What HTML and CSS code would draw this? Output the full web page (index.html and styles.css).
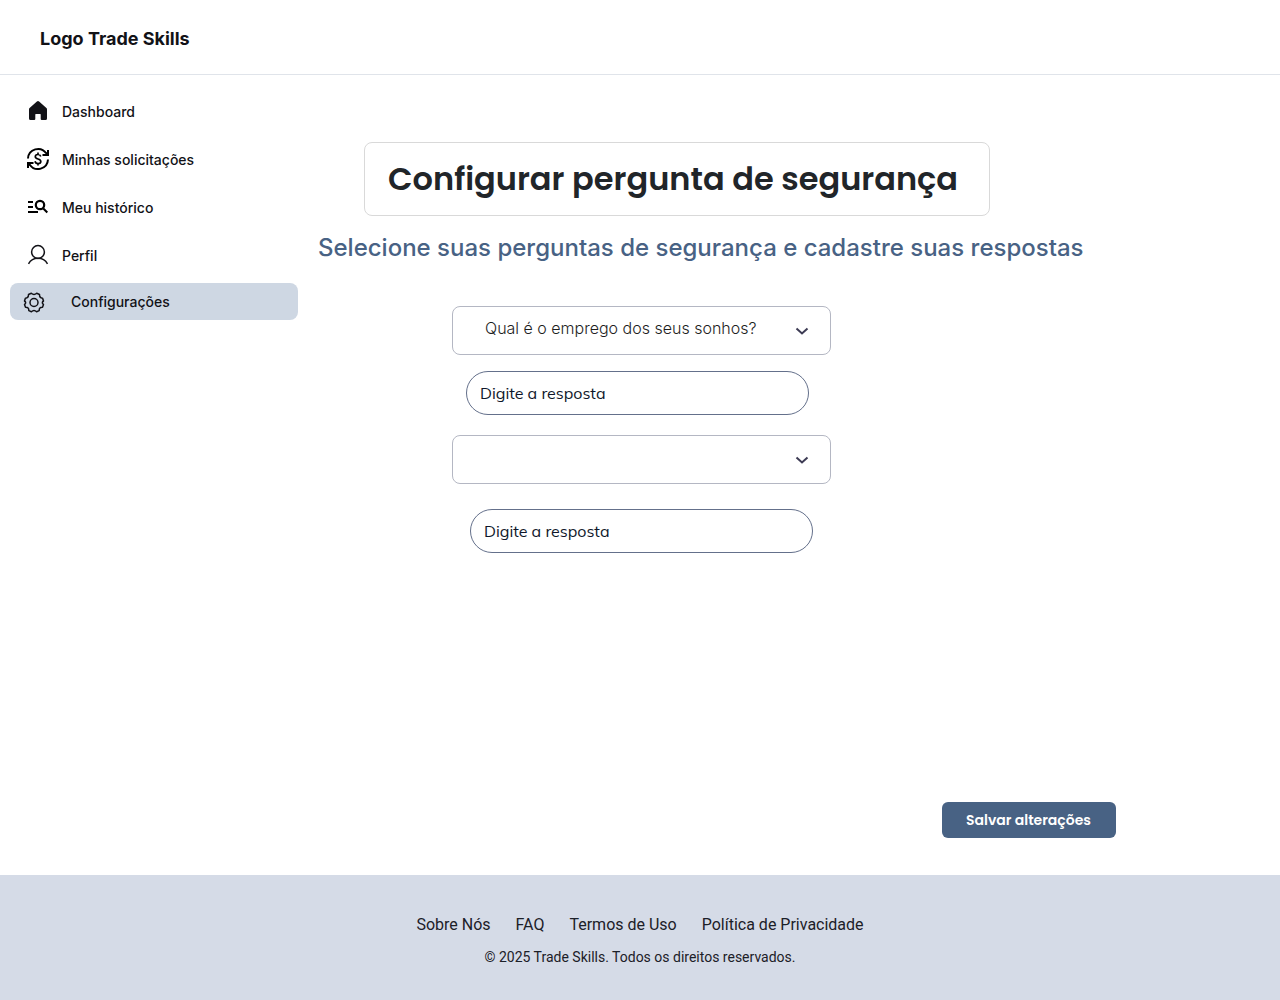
FILE: index.html
```html
<!DOCTYPE html>
<html lang="pt-BR">
<head>
<meta charset="utf-8">
<meta name="viewport" content="width=device-width, initial-scale=1">
<title>Trade Skills – Configurar pergunta de segurança</title>
<link rel="stylesheet" href="styles.css">
</head>
<body>
<header class="topbar"><a class="brand" href="#">Logo Trade Skills</a></header>
<div class="layout">
  <nav class="sidebar" aria-label="Menu principal">
    <a class="nav-link" href="#">
      <svg class="icon" viewBox="0 0 24 24" aria-hidden="true"><path fill="#121217" d="M10.9 2.5a1.6 1.6 0 0 1 2.2 0l7.3 6.6c.4.4.6.8.6 1.300V19.500a1.500 1.500 0 0 1-1.500 1.500h-3.700a1.100 1.100 0 0 1-1.100-1.100V15.500a.5.5 0 0 0-.5-.5h-4.400a.5.5 0 0 0-.5.5v4.400a1.100 1.100 0 0 1-1.100 1.100H4.500A1.500 1.500 0 0 1 3 19.500v-9.100c0-.5.2-.9.6-1.300z"/></svg>
      <span class="nav-text">Dashboard</span>
    </a>
    <a class="nav-link" href="#">
      <svg class="icon" viewBox="0 0 24 24" aria-hidden="true" fill="none" stroke="#000" stroke-width="2"><path d="M2 11.500A10 10 0 0 1 20.200 6.300M22 12.500A10 10 0 0 1 3.800 17.700M22 3v5h-5.500M2 21v-5h5.500"/><path stroke-width="1.700" d="M14.800 9.500C14.400 8.300 13.400 7.500 12 7.500c-1.600 0-2.700.9-2.700 2.200 0 3 5.500 1.600 5.500 4.700 0 1.300-1.200 2.200-2.800 2.200-1.600 0-2.700-.9-3-2.300M12 5.500v2M12 16.500v2"/><path fill="#000" stroke="none" d="M17.500 8.500H22V4zM6.500 15.500H2V20z"/></svg>
      <span class="nav-text">Minhas solicitações</span>
    </a>
    <a class="nav-link" href="#">
      <svg class="icon" viewBox="0 0 24 24" aria-hidden="true" fill="none" stroke="#000" stroke-width="2"><path d="M2 7h5M2 12h5M2 17h10M17.300 13.500 21.300 17.500"/><circle cx="14" cy="10" r="4.200" stroke-width="2.200"/></svg>
      <span class="nav-text">Meu histórico</span>
    </a>
    <a class="nav-link" href="#">
      <svg class="icon" viewBox="0 0 24 24" aria-hidden="true" fill="none" stroke="#121217" stroke-width="1.500"><circle cx="12" cy="9" r="6.400"/><path d="M2.500 20.800a11 11 0 0 1 19 0"/></svg>
      <span class="nav-text">Perfil</span>
    </a>
    <a class="nav-link nav-link-active" href="#" aria-current="page">
      <svg class="icon" viewBox="0 0 24 24" aria-hidden="true" fill="none" stroke="#121217" stroke-width="1.500" stroke-linejoin="round"><circle cx="12" cy="12.500" r="4"/><path d="M9.300 3.300Q12 5.600 14.700 3.300L17.500 4.500Q17.300 8 20.600 8.200L21.500 11Q19.200 12.500 21.500 14.500L20.500 17.200Q17 17 17.200 20.600L14.600 21.700Q12 19.200 9.400 21.700L6.800 20.600Q7 17 3.500 17.200L2.500 14.500Q4.800 12.500 2.500 11L3.400 8.200Q6.700 8 6.500 4.500z"/></svg>
      <span class="nav-text">Configurações</span>
    </a>
  </nav>
  <main class="content">
    <h1 class="title">Configurar pergunta de segurança</h1>
    <p class="subtitle">Selecione suas perguntas de segurança e cadastre suas respostas</p>
    <form class="form" id="security-form">
      <div class="select-box">
        <select class="select" aria-label="Primeira pergunta de segurança"><option>Qual é o emprego dos seus sonhos?</option></select>
        <svg class="chevron" viewBox="0 0 16 16" aria-hidden="true"><path d="m2.500 5.500 5.500 5 5.500-5"/></svg>
      </div>
      <input class="answer" type="text" placeholder="Digite a resposta" aria-label="Resposta da primeira pergunta">
      <div class="select-box">
        <select class="select" aria-label="Segunda pergunta de segurança"><option></option></select>
        <svg class="chevron" viewBox="0 0 16 16" aria-hidden="true"><path d="m2.500 5.500 5.500 5 5.500-5"/></svg>
      </div>
      <input class="answer answer-second" type="text" placeholder="Digite a resposta" aria-label="Resposta da segunda pergunta">
    </form>
    <button class="save" type="submit" form="security-form">Salvar alterações</button>
  </main>
</div>
<footer class="footer">
  <nav class="footer-links" aria-label="Rodapé">
    <a href="#">Sobre Nós</a><a href="#">FAQ</a><a href="#">Termos de Uso</a><a href="#">Política de Privacidade</a>
  </nav>
  <p class="copyright">© 2025 Trade Skills. Todos os direitos reservados.</p>
</footer>
</body>
</html>
```
FILE: styles.css
```css
* { box-sizing: border-box; }
body {
  margin: 0;
  min-height: 100vh;
  display: flex;
  flex-direction: column;
  background: #fff;
  color: #121217;
  font-family: Inter, "Liberation Sans", sans-serif;
}
a { color: inherit; text-decoration: none; }

.topbar {
  padding: 27px 40px 23px;
  border-bottom: 1px solid #e0e4ea;
}
.brand { display: block; font-size: 18px; line-height: 24px; font-weight: 700; }

.layout { flex: 1; display: flex; }
.sidebar {
  flex: none;
  width: 298px;
  padding: 12px 0 0 10px;
  display: flex;
  flex-direction: column;
}
.nav-link {
  display: flex;
  align-items: center;
  gap: 12px;
  height: 48px;
  padding-left: 16px;
  font-size: 14px;
  line-height: 20px;
  font-weight: 500;
}
.nav-text { padding-top: 2px; }
.nav-link-active {
  height: 37px;
  margin-top: 4px;
  padding-left: 12px;
  gap: 25px;
  background: #ced7e3;
  border-radius: 8px;
}
.nav-link-active .nav-text { padding-top: 0; }
.icon { width: 24px; height: 24px; flex: none; }

.content {
  flex: 1;
  padding: 67px 164px 37px 20px;
  display: flex;
  flex-direction: column;
  align-items: flex-start;
}
.title {
  margin: 0 0 0 46px;
  padding: 11px 31px 11px 23px;
  border: 1px solid #d9d9d9;
  border-radius: 8px;
  color: #212529;
  font-family: Poppins, Inter, sans-serif;
  font-size: 32px;
  line-height: 50px;
  font-weight: 600;
  white-space: nowrap;
}
.subtitle {
  margin: 16px 0 0;
  color: #486284;
  font-size: 24px;
  line-height: 32px;
  font-weight: 500;
  white-space: nowrap;
}
.form {
  width: 379px;
  margin: 42px 0 0 134px;
  display: flex;
  flex-direction: column;
}
.select-box { display: grid; align-items: center; }
.select, .chevron { grid-area: 1 / 1; }
.select {
  appearance: none;
  width: 100%;
  height: 49px;
  padding: 0 60px 5px 32px;
  border: 1px solid #b4b7c3;
  border-radius: 8px;
  background: #fff;
  color: #1e1e1e;
  font-family: inherit;
  font-size: 16px;
  font-weight: 300;
}
.chevron {
  width: 16px;
  height: 16px;
  margin-right: 21px;
  justify-self: end;
  pointer-events: none;
  fill: none;
  stroke: #3d3b54;
  stroke-width: 2;
}
.answer {
  width: 343px;
  height: 44px;
  margin: 16px 0 20px 14px;
  padding: 0 13px;
  border: 1px solid #64708b;
  border-radius: 22px;
  background: #fff;
  color: #0f172a;
  font-family: Mulish, Lato, sans-serif;
  font-size: 16px;
}
.answer-second { margin: 25px 0 0 18px; }
.answer::placeholder { color: #0f172a; opacity: 1; }
.save {
  margin-top: auto;
  align-self: flex-end;
  height: 36px;
  padding: 0 25px 0 24px;
  border: 0;
  border-radius: 6px;
  background: #486284;
  color: #fff;
  font-family: Poppins, Inter, sans-serif;
  font-size: 14px;
  font-weight: 600;
}

.footer {
  padding: 38px 24px 33px;
  background: #d5dbe7;
  color: #1c2028;
  font-family: Roboto, sans-serif;
  text-align: center;
}
.footer-links { display: flex; justify-content: center; gap: 25px; font-size: 16px; line-height: 24px; }
.copyright { margin: 10px 0 0; font-size: 14px; line-height: 20px; }
```
